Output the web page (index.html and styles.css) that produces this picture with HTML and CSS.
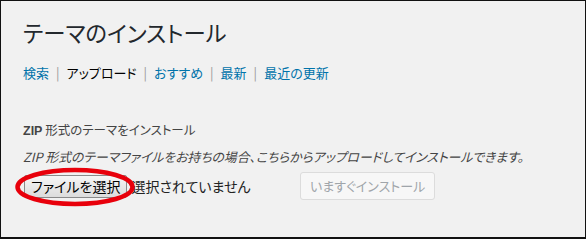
FILE: index.html
```html
<!DOCTYPE html>
<html lang="ja">
<head>
<meta charset="utf-8">
<link rel="stylesheet" href="styles.css">
</head>
<body>
<div class="frame">
  <h1 class="title">テーマのインストール</h1>
  <ul class="subnav">
    <li><a class="link">検索</a><span class="sep">|</span></li>
    <li><span class="current">アップロード</span><span class="sep">|</span></li>
    <li><a class="link">おすすめ</a><span class="sep">|</span></li>
    <li><a class="link">最新</a><span class="sep">|</span></li>
    <li><a class="link">最近の更新</a></li>
  </ul>
  <div class="upload">
    <p class="label"><b class="zip">ZIP</b> 形式のテーマをインストール</p>
    <p class="desc">ZIP 形式のテーマファイルをお持ちの場合、こちらからアップロードしてインストールできます。</p>
    <div class="row">
      <div class="file">
        <span class="filebtn">ファイルを選択</span>
        <span class="status">選択されていません</span>
        <svg class="circle" width="130" height="50" viewBox="0 0 130 50">
          <ellipse cx="63" cy="24" rx="57.5" ry="17" fill="none" stroke="#e8000b" stroke-width="4.5"/>
        </svg>
      </div>
      <span class="install">いますぐインストール</span>
    </div>
  </div>
</div>
</body>
</html>
```
FILE: styles.css
```css
html, body {
  margin: 0;
  padding: 0;
}
body {
  width: 586px;
  height: 239px;
  overflow: hidden;
  font-family: "Noto Sans CJK JP", "Noto Sans", sans-serif;
  font-feature-settings: "palt";
  color: #444;
}
.frame {
  box-sizing: border-box;
  width: 586px;
  height: 239px;
  background: #f1f1f1;
  border: 1px solid #111;
  border-bottom-width: 2px;
  padding: 14px 0 0 22px;
}
.title {
  margin: 0;
  font-size: 22.4px;
  line-height: 34px;
  font-weight: 400;
  color: #23282d;
}
.subnav {
  list-style: none;
  margin: 14px 0 0;
  padding: 0;
  display: flex;
  font-size: 13px;
  line-height: 20px;
}
.subnav li {
  display: flex;
}
.link {
  color: #0073aa;
}
.current {
  color: #000;
}
.sep {
  color: #999;
  margin: 0 7px;
}
.upload {
  margin-top: 38px;
}
.label {
  margin: 0;
  font-size: 12.5px;
  line-height: 18px;
  color: #444;
}
.zip {
  font-weight: 700;
  font-family: "Liberation Sans", sans-serif;
}
.desc {
  margin: 8px 0 0;
  font-size: 12.8px;
  line-height: 18px;
  font-style: italic;
  color: #444;
}
.row {
  display: flex;
  align-items: center;
  margin-top: 6px;
  margin-left: 1px;
}
.file {
  position: relative;
  display: flex;
  align-items: center;
  width: 276px;
}
.filebtn {
  box-sizing: border-box;
  height: 23px;
  padding: 0 6px;
  border: 1px solid #8a8a8a;
  border-radius: 2px;
  background: linear-gradient(#f6f6f6, #dcdcdc);
  font-size: 14px;
  line-height: 21px;
  color: #000;
}
.status {
  margin-left: 4px;
  font-size: 14px;
  color: #222;
}
.circle {
  position: absolute;
  left: -12px;
  top: -11.5px;
}
.install {
  box-sizing: border-box;
  height: 28px;
  padding: 0 9px;
  border: 1px solid #dcdcdc;
  border-radius: 3px;
  background: #f7f7f7;
  font-size: 13px;
  line-height: 26px;
  color: #a0a5aa;
}
```
